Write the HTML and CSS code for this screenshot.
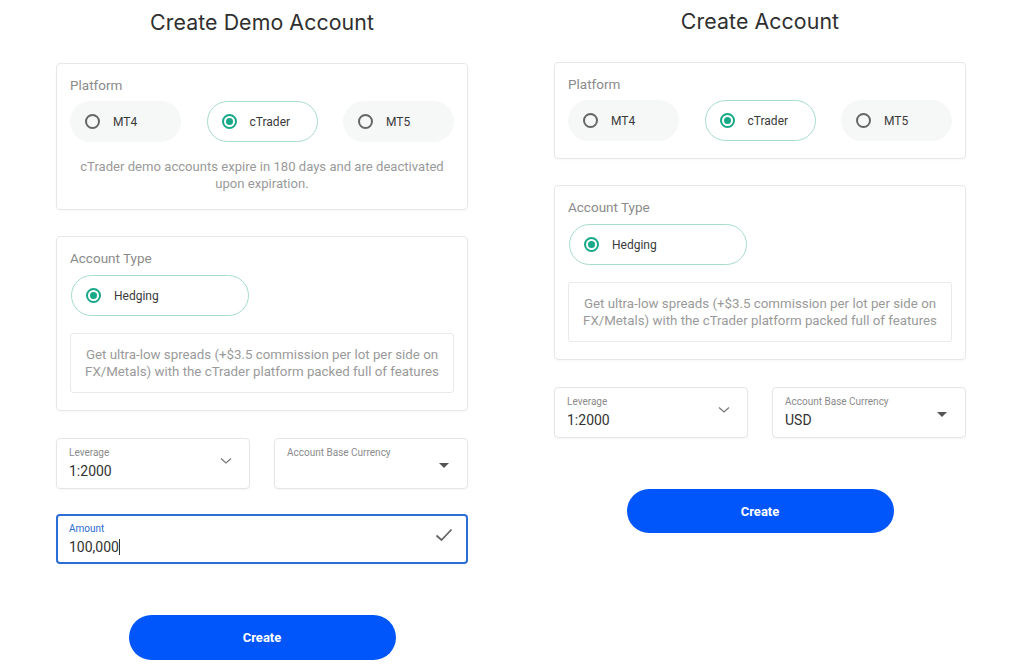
FILE: index.html
```html
<!DOCTYPE html>
<html lang="en">
<head>
<meta charset="utf-8">
<title>Create Account</title>
<link rel="stylesheet" href="styles.css">
</head>
<body>
<div class="page">
  <section class="column demo">
    <h1 class="title">Create Demo Account</h1>
    <div class="card platform">
      <div class="card-label">Platform</div>
      <div class="pills">
        <div class="pill"><span class="radio"></span><span class="pill-text">MT4</span></div>
        <div class="pill selected"><span class="radio on"></span><span class="pill-text">cTrader</span></div>
        <div class="pill"><span class="radio"></span><span class="pill-text">MT5</span></div>
      </div>
      <p class="note">cTrader demo accounts expire in 180 days and are deactivated upon expiration.</p>
    </div>
    <div class="card type">
      <div class="card-label">Account Type</div>
      <div class="pill selected wide"><span class="radio on"></span><span class="pill-text">Hedging</span></div>
      <div class="desc">Get ultra-low spreads (+$3.5 commission per lot per side on FX/Metals) with the cTrader platform packed full of features</div>
    </div>
    <div class="fields">
      <div class="field">
        <div class="field-body">
          <div class="field-label">Leverage</div>
          <div class="field-value">1:2000</div>
        </div>
        <svg class="chev" width="12" height="8" viewBox="0 0 12 8"><path d="M1 1.5 L6 6 L11 1.5" fill="none" stroke="#7a7a7a" stroke-width="1.3"/></svg>
      </div>
      <div class="field">
        <div class="field-body">
          <div class="field-label">Account Base Currency</div>
          <div class="field-value">&nbsp;</div>
        </div>
        <svg class="caret" width="10" height="6" viewBox="0 0 10 6"><path d="M0 0 H10 L5 5 Z" fill="#555"/></svg>
      </div>
    </div>
    <div class="field amount">
      <div class="field-body">
        <div class="field-label blue">Amount</div>
        <div class="field-value">100,000<span class="cursor"></span></div>
      </div>
      <svg class="check" width="18" height="14" viewBox="0 0 18 14"><path d="M1.5 7.5 L6.5 12 L16.5 1.5" fill="none" stroke="#666" stroke-width="1.8"/></svg>
    </div>
    <button class="create">Create</button>
  </section>

  <section class="column real">
    <h1 class="title">Create Account</h1>
    <div class="card platform short">
      <div class="card-label">Platform</div>
      <div class="pills">
        <div class="pill"><span class="radio"></span><span class="pill-text">MT4</span></div>
        <div class="pill selected"><span class="radio on"></span><span class="pill-text">cTrader</span></div>
        <div class="pill"><span class="radio"></span><span class="pill-text">MT5</span></div>
      </div>
    </div>
    <div class="card type">
      <div class="card-label">Account Type</div>
      <div class="pill selected wide"><span class="radio on"></span><span class="pill-text">Hedging</span></div>
      <div class="desc">Get ultra-low spreads (+$3.5 commission per lot per side on FX/Metals) with the cTrader platform packed full of features</div>
    </div>
    <div class="fields">
      <div class="field">
        <div class="field-body">
          <div class="field-label">Leverage</div>
          <div class="field-value">1:2000</div>
        </div>
        <svg class="chev" width="12" height="8" viewBox="0 0 12 8"><path d="M1 1.5 L6 6 L11 1.5" fill="none" stroke="#7a7a7a" stroke-width="1.3"/></svg>
      </div>
      <div class="field">
        <div class="field-body">
          <div class="field-label">Account Base Currency</div>
          <div class="field-value">USD</div>
        </div>
        <svg class="caret" width="10" height="6" viewBox="0 0 10 6"><path d="M0 0 H10 L5 5 Z" fill="#555"/></svg>
      </div>
    </div>
    <button class="create">Create</button>
  </section>
</div>
</body>
</html>
```

FILE: styles.css
```css
* { box-sizing: border-box; }

html, body {
  margin: 0;
  padding: 0;
  background: #ffffff;
}

body {
  font-family: Roboto, "Liberation Sans", Arial, sans-serif;
  color: #333;
  width: 1024px;
  height: 669px;
  overflow: hidden;
}

.page {
  display: flex;
  gap: 86px;
  padding-left: 56px;
}

.column {
  width: 412px;
  display: flex;
  flex-direction: column;
}

.demo { padding-top: 10px; }
.real { padding-top: 9px; }

.title {
  margin: 0 0 28px;
  height: 25px;
  font-family: Inter, Roboto, sans-serif;
  font-size: 21.3px;
  font-weight: 400;
  line-height: 25px;
  text-align: center;
  color: #2f2f2f;
  letter-spacing: 0.1px;
}

.card {
  border: 1px solid #e6e7e7;
  border-radius: 4px;
  padding: 13px 13px 17px;
  margin-bottom: 26px;
  box-shadow: 0 1px 2px rgba(0,0,0,0.03);
}

.card-label {
  font-size: 13.5px;
  color: #8b8b8b;
  line-height: 16px;
  margin-bottom: 21px;
}

.type .card-label { margin-bottom: 9px; }

.pills {
  display: flex;
  justify-content: space-between;
}

.pill {
  width: 111px;
  height: 41px;
  border-radius: 21px;
  background: #f6f7f7;
  border: 1px solid transparent;
  display: flex;
  align-items: center;
  padding-left: 14px;
}

.platform .pill {
  margin-top: -13px;
}

.pill.selected {
  background: #fff;
  border-color: #a7dccd;
}

.pill.wide { width: 178px; }

.radio {
  width: 15px;
  height: 15px;
  border-radius: 50%;
  border: 2px solid #666;
  display: flex;
  align-items: center;
  justify-content: center;
  flex-shrink: 0;
}

.radio.on {
  border-color: #17a988;
}

.radio.on::after {
  content: "";
  width: 7px;
  height: 7px;
  border-radius: 50%;
  background: #17a988;
}

.pill-text {
  margin-left: 13px;
  font-size: 12px;
  color: #3a3a3a;
}

.note {
  margin: 16px 0 0;
  font-size: 13.1px;
  line-height: 17px;
  color: #9a9a9a;
  text-align: center;
}

.desc {
  margin-top: 17px;
  border: 1px solid #e8e9e9;
  border-radius: 3px;
  padding: 12px 8px;
  font-size: 13.3px;
  line-height: 17px;
  color: #9a9a9a;
  text-align: center;
}

.type .pill { margin-left: 1px; }

.fields {
  display: flex;
  justify-content: space-between;
  margin-top: 1px;
}

.field {
  width: 194px;
  height: 51px;
  border: 1px solid #e4e5e5;
  border-radius: 4px;
  display: flex;
  align-items: center;
  justify-content: space-between;
  padding: 0 15px 0 12px;
  box-shadow: 0 1px 2px rgba(0,0,0,0.04);
}

.field-body {
  display: flex;
  flex-direction: column;
  margin-top: 1px;
}

.field-label {
  font-size: 10px;
  line-height: 12px;
  color: #8b8b8b;
}

.field-label.blue { color: #2a6bd2; }

.field-value {
  font-size: 14px;
  line-height: 19px;
  color: #333;
  margin-top: 3px;
}

.chev { margin-top: -5px; margin-right: 2px; }
.caret { margin-top: 4px; margin-right: 3px; }

.amount {
  width: 412px;
  height: 50px;
  margin-top: 25px;
  border: 2px solid #2c6ed5;
  padding-left: 11px;
  padding-right: 13px;
}

.cursor {
  display: inline-block;
  width: 1px;
  height: 16px;
  background: #333;
  vertical-align: -3px;
}

.check { margin-top: -8px; }

.create {
  align-self: center;
  width: 267px;
  height: 45px;
  margin-top: 51px;
  border: none;
  border-radius: 23px;
  background: #0156fb;
  color: #fff;
  font-family: Roboto, "Liberation Sans", sans-serif;
  font-size: 13px;
  font-weight: 700;
}

.real .create { height: 44px; }
```
